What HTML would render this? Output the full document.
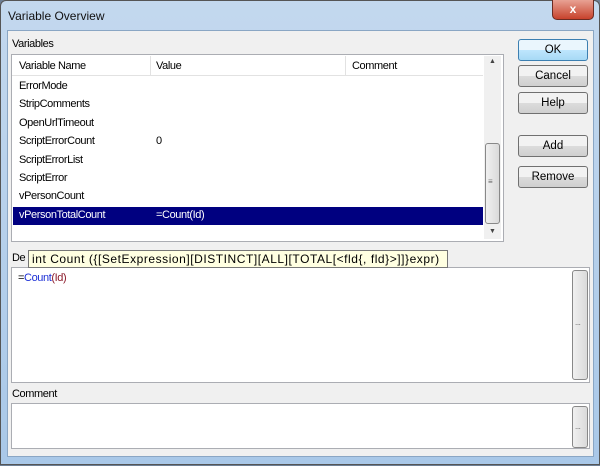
<!DOCTYPE html><html><head><style>
body{margin:0;width:600px;height:466px;overflow:hidden;background:#6d7f95;font-family:"Liberation Sans",sans-serif;font-size:11px;color:#000}
.win{position:absolute;left:0;top:0;width:598px;height:463px;background:linear-gradient(#c3d8ee,#a9c8e8);border:1px solid #555;border-radius:6px 6px 0 0}
.title{position:absolute;left:8px;top:9px;font-size:12px;color:#111}
.close{position:absolute;left:552px;top:0;width:40px;height:19px;background:linear-gradient(#e8a294,#c7422c);border:1px solid #6b2b22;border-top:none;border-radius:0 0 5px 5px;color:#fff;text-align:center;font-weight:bold;font-size:12px;line-height:18px}
.client{position:absolute;left:7px;top:30px;width:585px;height:425px;background:#f0f0f0;border:1px solid #8aa6c4}
.a{position:absolute}
.t{position:absolute;letter-spacing:-0.4px;white-space:nowrap}
.btn{position:absolute;left:518px;width:68px;height:20px;border:1px solid #707070;border-radius:3px;background:linear-gradient(#f2f2f2 50%,#dcdcdc 50%,#cfcfcf);text-align:center;line-height:20px;font-size:11.5px}
.box{position:absolute;background:#fff;border:1px solid #abadb3}
.sb{position:absolute;border:1px solid #888;border-radius:3px;background:linear-gradient(90deg,#f0f0f0,#dadada)}
</style></head><body>
<div class="win"></div>
<div class="title">Variable Overview</div>
<div class="close">x</div>
<div class="client"></div>
<div class="t" style="left:12px;top:38px">Variables</div>
<div class="box" style="left:11px;top:54px;width:491px;height:186px"></div>
<div class="a" style="left:12px;top:55px;width:471px;height:20px;background:#fff;border-bottom:1px solid #e2e2e2"></div>
<div class="a" style="left:150px;top:56px;width:1px;height:19px;background:#e2e2e2"></div>
<div class="a" style="left:345px;top:56px;width:1px;height:19px;background:#e2e2e2"></div>
<div class="t" style="left:19px;top:60px">Variable Name</div>
<div class="t" style="left:156px;top:60px">Value</div>
<div class="t" style="left:352px;top:60px">Comment</div>
<div class="t" style="left:19px;top:80px">ErrorMode</div>
<div class="t" style="left:19px;top:98px">StripComments</div>
<div class="t" style="left:19px;top:117px">OpenUrlTimeout</div>
<div class="t" style="left:19px;top:135px">ScriptErrorCount</div>
<div class="t" style="left:156px;top:135px">0</div>
<div class="t" style="left:19px;top:154px">ScriptErrorList</div>
<div class="t" style="left:19px;top:172px">ScriptError</div>
<div class="t" style="left:19px;top:190px">vPersonCount</div>
<div class="a" style="left:13px;top:207px;width:470px;height:18px;background:#000080"></div>
<div class="t" style="left:19px;top:209px;color:#fff">vPersonTotalCount</div>
<div class="t" style="left:156px;top:209px;color:#fff">=Count(Id)</div>
<div class="a" style="left:484px;top:56px;width:17px;height:183px;background:#f0f0f0"></div>
<div class="t" style="left:489px;top:58px;font-size:7px;color:#444">▲</div>
<div class="t" style="left:489px;top:228px;font-size:7px;color:#444">▼</div>
<div class="sb" style="left:485px;top:143px;width:13px;height:79px"></div>
<div class="t" style="left:488px;top:177px;font-size:8px;color:#666">≡</div>
<div class="btn" style="top:39px;border-color:#3c7fb1;background:linear-gradient(#eaf6fd 50%,#bee6fd 50%,#a7d9f5)">OK</div>
<div class="btn" style="top:65px">Cancel</div>
<div class="btn" style="top:92px">Help</div>
<div class="btn" style="top:135px">Add</div>
<div class="btn" style="top:166px">Remove</div>
<div class="t" style="left:12px;top:252px">De</div>
<div class="box" style="left:11px;top:267px;width:577px;height:114px"></div>
<div class="sb" style="left:572px;top:270px;width:14px;height:108px"></div>
<div class="t" style="left:575px;top:318px;color:#666;font-size:8px">...</div>
<div class="a" style="left:28px;top:250px;width:418px;height:16px;background:#ffffe1;border:1px solid #767676"></div>
<div class="t" style="left:32px;top:252px;font-size:12px;letter-spacing:0.55px">int Count ({[SetExpression][DISTINCT][ALL][TOTAL[&lt;fld{, fld}&gt;]]}expr)</div>
<div class="t" style="left:18px;top:272px">=<span style="color:#1c2fd6">Count</span><span style="color:#8b1a2a">(Id)</span></div>
<div class="t" style="left:12px;top:388px">Comment</div>
<div class="box" style="left:11px;top:403px;width:577px;height:44px"></div>
<div class="sb" style="left:572px;top:406px;width:14px;height:40px"></div>
<div class="t" style="left:575px;top:422px;color:#666;font-size:8px">...</div>
</body></html>
